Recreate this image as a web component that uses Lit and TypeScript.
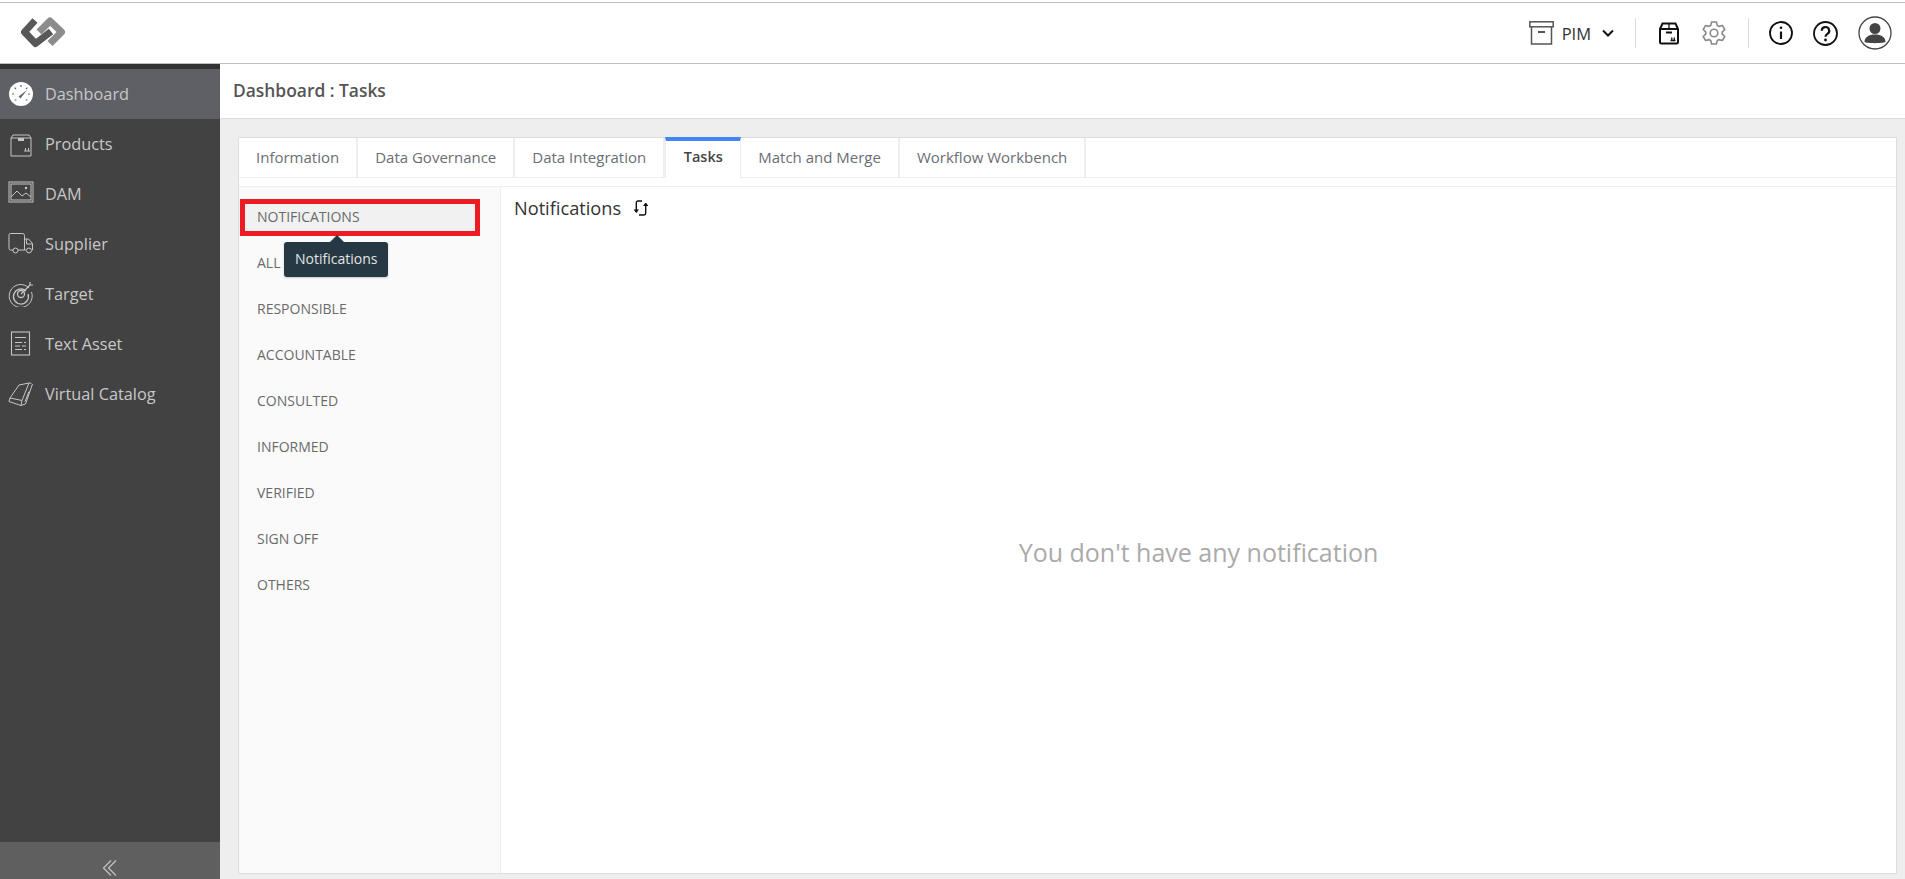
import { LitElement, html, css, svg } from 'lit';
import { customElement } from 'lit/decorators.js';

const navIcons: Record<string, unknown> = {
  Dashboard: svg`<circle cx="13" cy="13" r="12" fill="#fff"/>
    <path d="M13 4v2M4 13h2M20 13h2M6.600 6.600l1.400 1.400M19.400 6.600L18 8M6.500 19h2M17.500 19h2" stroke="#666" stroke-width="1.200"/>
    <path d="M10.500 15.500L19 9l-6.500 8.500z" fill="#666"/>`,
  Products: svg`<path d="M3 7l2-3h16l2 3v18H3z M3 7h20" fill="none" stroke="#c6c6c6" stroke-width="1"/>
    <rect x="10" y="7" width="6" height="3" fill="#c6c6c6"/>
    <path d="M16 20h6M17.500 17v3M20.500 17v3" stroke="#c6c6c6" stroke-width="1"/>`,
  DAM: svg`<rect x="1" y="1" width="24" height="20" fill="none" stroke="#c6c6c6"/><rect x="3" y="3" width="20" height="16" fill="none" stroke="#c6c6c6"/>
    <path d="M3 16l6-6 5 5 4-3 5 4" fill="none" stroke="#c6c6c6"/><circle cx="18" cy="7" r="1.200" fill="#c6c6c6"/>`,
  Supplier: svg`<path d="M5 19H2.500a1.500 1.500 0 0 1-1.500-1.500V4a1.500 1.500 0 0 1 1.500-1.500h12a2 2 0 0 1 2 2V19H10M16.500 8h4l4 4.500V19H24M16.500 19h1.500M18.500 8v5h6" fill="none" stroke="#c6c6c6"/>
    <circle cx="7.500" cy="19.500" r="2.500" fill="none" stroke="#c6c6c6"/><circle cx="21" cy="19.500" r="2.500" fill="none" stroke="#c6c6c6"/>`,
  Target: svg`<path d="M21 7A11.500 11.500 0 1 0 23.500 11" fill="none" stroke="#c6c6c6"/>
    <path d="M18 10A7.500 7.500 0 1 0 20 13" fill="none" stroke="#c6c6c6" stroke-width="1.300"/><circle cx="13" cy="13" r="3.500" fill="none" stroke="#c6c6c6" stroke-width="1.300"/>
    <path d="M13 13l9-9M22 1v3h3" fill="none" stroke="#c6c6c6" stroke-width="1.200"/>`,
  'Text Asset': svg`<rect x="3.500" y="1" width="18" height="23" fill="none" stroke="#c6c6c6" stroke-width="1.100"/>
    <path d="M7 6.500h11M7 11.500h7M16 11.500h2M7 15h5M14 15h4M7 18.500h7M16 18.500h2" stroke="#c6c6c6"/>`,
  'Virtual Catalog': svg`<path d="M11 4l10-2-7 17.500L2 17z" fill="none" stroke="#c6c6c6" stroke-linejoin="round"/>
    <path d="M2 17l-1 3.500 12 4 4.500-1.500L24.500 3M14 19.500l-1 5M21 2l2.500.3M17 20.500l4-10" fill="none" stroke="#c6c6c6"/>`,
};

// six-tooth cog outline, centred on 12,12
const gearPath = () => {
  const pt = (r: number, deg: number) => {
    const a = (deg * Math.PI) / 180;
    return `${(12 + r * Math.cos(a)).toFixed(2)} ${(12 + r * Math.sin(a)).toFixed(2)}`;
  };
  let d = '';
  for (let i = 0; i < 6; i++) {
    const c = -90 + i * 60;
    d += `${i === 0 ? 'M' : 'L'}${pt(8.2, c - 24)}L${pt(11.3, c - 12)}L${pt(11.3, c + 12)}L${pt(8.2, c + 24)}`;
  }
  return d + 'Z';
};

const tabs = ['Information', 'Data Governance', 'Data Integration', 'Tasks', 'Match and Merge', 'Workflow Workbench'];
const groups = ['NOTIFICATIONS', 'ALL', 'RESPONSIBLE', 'ACCOUNTABLE', 'CONSULTED', 'INFORMED', 'VERIFIED', 'SIGN OFF', 'OTHERS'];

@customElement('app-root')
export class AppRoot extends LitElement {
  static styles = css`
    :host {
      display: flex;
      flex-direction: column;
      height: 100vh;
      overflow: hidden;
      padding-top: 2px;
      box-sizing: border-box;
      background: #fff;
      font-family: 'Open Sans', sans-serif;
      color: #555;
    }
    svg { display: block; flex-shrink: 0; }

    .topbar {
      height: 60px;
      flex-shrink: 0;
      display: flex;
      align-items: center;
      border-top: 1px solid #bdbdbd;
      border-bottom: 1px solid #bdbdbd;
      padding: 0 13px 0 20px;
    }
    .logo { margin-right: auto; }
    .pim { font-size: 16.5px; color: #333; margin: 0 11px 0 8px; }
    .sep { width: 1px; height: 30px; background: #ddd; margin: 0 22px 0 21px; }
    .sep.second { margin: 0 20px 0 22px; }
    .gear { margin-left: 22px; }
    .help { margin: 0 20px; }

    .body { flex: 1; display: flex; min-height: 0; }

    .sidebar {
      width: 220px;
      flex-shrink: 0;
      display: flex;
      flex-direction: column;
      background: #424242;
      border-top: 5px solid #333;
    }
    .nav { flex: 1; }
    .nav-item {
      height: 50px;
      display: flex;
      align-items: center;
      gap: 11px;
      padding-left: 8px;
      font-size: 16.3px;
      color: #c8c8c8;
    }
    .nav-item span { padding-bottom: 1px; }
    .nav-item.active { background: #5f6065; }
    .collapse {
      height: 37px;
      display: flex;
      justify-content: center;
      align-items: flex-end;
      padding-bottom: 3px;
      box-sizing: border-box;
      background: #5f5f5f;
    }

    .main { flex: 1; display: flex; flex-direction: column; min-width: 0; background: #eee; }
    .title {
      height: 55px;
      flex-shrink: 0;
      display: flex;
      align-items: center;
      padding: 0 13px;
      padding-bottom: 3px;
      box-sizing: border-box;
      background: #fff;
      border-bottom: 1px solid #ddd;
      font-size: 17.4px;
      font-weight: 600;
      color: #555;
    }
    .card {
      flex: 1;
      min-height: 0;
      margin: 18px 8px 5px 18px;
      display: flex;
      flex-direction: column;
      background: #fff;
      border: 1px solid #ddd;
    }
    .tabs {
      height: 39px;
      flex-shrink: 0;
      display: flex;
      border-bottom: 1px solid #eee;
    }
    .tab {
      padding: 0 17px 1px;
      display: flex;
      align-items: center;
      font-size: 15px;
      color: #6a6e76;
      border-right: 2px solid #eee;
    }
    .tab.active {
      margin-top: -1px;
      margin-bottom: -1px;
      padding: 0 17.500px 6px;
      color: #444;
      font-size: 14.500px;
      font-weight: 600;
      background: #fff;
      border-top: 4px solid #4285f4;
      border-left: 1px solid #eee;
      border-right-width: 1px;
    }
    .split {
      flex: 1;
      min-height: 0;
      margin-top: 8px;
      display: flex;
      border-top: 1px solid #eee;
    }
    .groups {
      width: 262px;
      flex-shrink: 0;
      position: relative;
      box-sizing: border-box;
      padding: 12px 0 0 1px;
      display: flex;
      flex-direction: column;
      gap: 9px;
      background: #fafafa;
      border-right: 1px solid #eee;
    }
    .group {
      height: 37px;
      display: flex;
      align-items: center;
      padding-left: 17px;
      padding-bottom: 2px;
      box-sizing: border-box;
      font-size: 14px;
      color: #6a6a6a;
    }
    .group.selected {
      width: 240px;
      padding-left: 12px;
      background: #f1f1f1;
      border: 5px solid #ed1c24;
    }
    .tooltip {
      position: absolute;
      left: 45px;
      top: 55px;
      padding: 0 11px 2px;
      height: 35px;
      box-sizing: border-box;
      display: flex;
      align-items: center;
      background: #263844;
      color: #e4e4e4;
      font-size: 14px;
      border-radius: 3px;
      box-shadow: 0 1px 2px rgba(0, 0, 0, 0.2);
    }
    .tooltip::before {
      content: '';
      position: absolute;
      left: 46px;
      top: -7px;
      border-left: 7px solid transparent;
      border-right: 7px solid transparent;
      border-bottom: 7px solid #263844;
    }
    .panel { flex: 1; min-width: 0; display: flex; flex-direction: column; }
    .panel-head {
      display: flex;
      align-items: center;
      gap: 13px;
      padding: 0 13px 2px;
      height: 42px;
      flex-shrink: 0;
      font-size: 18.2px;
      color: #333;
    }
    .empty {
      flex: 1;
      display: flex;
      align-items: center;
      justify-content: center;
      font-size: 25px;
      color: #aaa;
    }
  `;

  render() {
    return html`
      <header class="topbar">
        <svg class="logo" width="46" height="32" viewBox="0 0 46 32">
          <path d="M31 14.500L15.500 26.500 4.500 15 15 3.500" fill="none" stroke="#585858" stroke-width="7" stroke-linejoin="round"/>
          <path d="M19 15L30 4 41.500 15 30 26.500" fill="none" stroke="#8c8c8c" stroke-width="7" stroke-linejoin="round"/>
        </svg>
        <svg width="25" height="24" viewBox="0 0 25 24" fill="none" stroke="#555" stroke-width="1.500">
          <rect x=".8" y=".8" width="23.400" height="5"/><path d="M2.500 6v17h20V6"/><rect x="9" y="10" width="7" height="2" fill="#555" stroke="none"/>
        </svg>
        <span class="pim">PIM</span>
        <svg width="12" height="8" viewBox="0 0 12 8"><path d="M1 1.500l5 5 5-5" fill="none" stroke="#111" stroke-width="2"/></svg>
        <span class="sep"></span>
        <svg width="22" height="24" viewBox="0 0 22 24" fill="none" stroke="#111" stroke-width="2">
          <path d="M2 8l2.500-5.500h13L20 8v13a1.500 1.500 0 0 1-1.500 1.500h-15A1.500 1.500 0 0 1 2 21z"/><path d="M2 8h18"/>
          <path d="M11 2.500V8" stroke-width="1.300"/><rect x="8" y="10.500" width="6" height="2" fill="#111" stroke="none"/>
          <path d="M12.500 19.500h5M13.800 16.500v3M16.300 16.500v3" stroke-width="1.300"/>
        </svg>
        <svg class="gear" width="24" height="24" viewBox="0 0 24 24" fill="none" stroke="#888" stroke-width="1.600" stroke-linejoin="round">
          <circle cx="12" cy="12" r="3.800"/>
          <path d=${gearPath()}/>
        </svg>
        <span class="sep second"></span>
        <svg width="24" height="24" viewBox="0 0 24 24" fill="none" stroke="#111" stroke-width="1.800">
          <circle cx="12" cy="12" r="11"/><path d="M12 10.500V18" stroke-width="2.200"/><circle cx="12" cy="6.800" r="1.300" fill="#111" stroke="none"/>
        </svg>
        <svg class="help" width="25" height="25" viewBox="0 0 25 25" fill="none" stroke="#111" stroke-width="1.800">
          <circle cx="12.500" cy="12.500" r="11.500"/><path d="M8.800 9.800a3.700 3.700 0 1 1 5.600 3.100c-1.300.8-1.900 1.400-1.900 2.800" stroke-width="2.200"/><circle cx="12.500" cy="19" r="1.400" fill="#111" stroke="none"/>
        </svg>
        <svg width="34" height="34" viewBox="0 0 34 34">
          <circle cx="17" cy="17" r="16" fill="none" stroke="#444" stroke-width="1.300"/>
          <circle cx="17" cy="12.500" r="5.500" fill="#444"/>
          <path d="M6.500 26c0-5 4.500-7.500 10.500-7.500S27.500 21 27.500 26c-2.500 1.500-18.500 1.500-21 0z" fill="#444"/>
        </svg>
      </header>
      <div class="body">
        <aside class="sidebar">
          <nav class="nav">
            ${Object.keys(navIcons).map(
              (name, i) => html`
                <div class="nav-item ${i === 0 ? 'active' : ''}">
                  <svg width="26" height="26" viewBox="0 0 26 26">${navIcons[name]}</svg>
                  <span>${name}</span>
                </div>
              `
            )}
          </nav>
          <div class="collapse">
            <svg width="16" height="16" viewBox="0 0 16 16" fill="none" stroke="#c4c4c4" stroke-width="1.200">
              <path d="M9 .5L1.500 8 9 15.500M14 .5L6.500 8l7.500 7.500"/>
            </svg>
          </div>
        </aside>
        <main class="main">
          <div class="title">Dashboard : Tasks</div>
          <section class="card">
            <div class="tabs">
              ${tabs.map((t) => html`<div class="tab ${t === 'Tasks' ? 'active' : ''}">${t}</div>`)}
            </div>
            <div class="split">
              <div class="groups">
                ${groups.map((g, i) => html`<div class="group ${i === 0 ? 'selected' : ''}">${g}</div>`)}
                <div class="tooltip">Notifications</div>
              </div>
              <div class="panel">
                <div class="panel-head">
                  <span>Notifications</span>
                  <svg width="14" height="16" viewBox="0 0 14 16" fill="none" stroke="#111" stroke-width="1.400">
                    <path d="M8 1H4a1.700 1.700 0 0 0-1.700 1.700V12M5 15h5a1.700 1.700 0 0 0 1.700-1.700V4"/>
                    <path d="M.2 9.500l2.100 3 2.100-3M9.600 6l2.100-3 2.100 3" fill="#111" stroke-width="1"/>
                  </svg>
                </div>
                <div class="empty">You don't have any notification</div>
              </div>
            </div>
          </section>
        </main>
      </div>
    `;
  }
}
